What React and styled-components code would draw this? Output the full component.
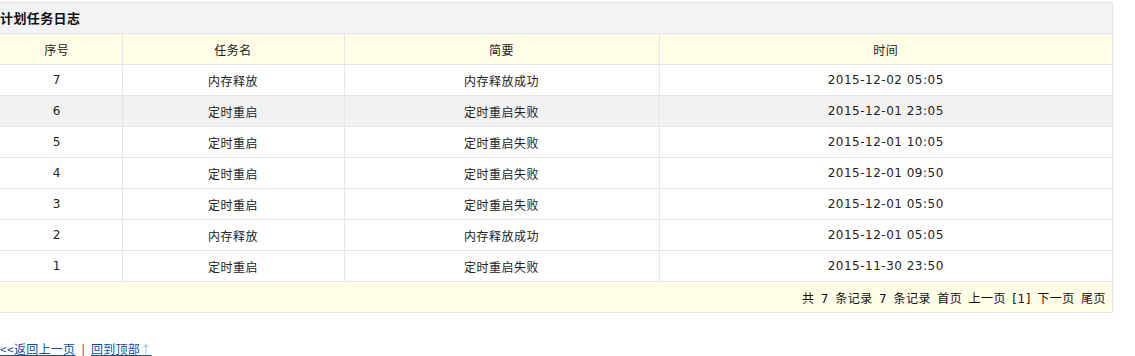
import React from 'react';
import styled, { createGlobalStyle } from 'styled-components';

const GlobalStyle = createGlobalStyle`
  body {
    margin: 0;
    background: #fff;
    font-family: "DejaVu Sans", "Noto Sans CJK SC", sans-serif;
    font-size: 12px;
    color: #222;
  }
`;

const Page = styled.div`
  width: 1122px;
  margin-left: -9px;
  padding-top: 2px;
`;

const Panel = styled.div`
  border: 1px solid #e3e6eb;
`;

const PanelTitle = styled.div`
  height: 30px;
  line-height: 30px;
  padding-left: 8px;
  background: #f2f3f5;
  border-bottom: 1px solid #e3e6eb;
  font-family: "Noto Sans CJK SC", sans-serif;
  font-size: 13px;
  font-weight: bold;
  letter-spacing: 0.4px;
  color: #111;
`;

const Table = styled.table`
  width: 100%;
  border-collapse: collapse;
  table-layout: fixed;
  letter-spacing: 0.5px;
`;

const HeadCell = styled.th`
  height: 30px;
  padding: 0;
  background: #fffde6;
  font-weight: normal;
  text-align: center;
  border-right: 1px solid #e3e6eb;
  border-bottom: 1px solid #e3e6eb;
  &:last-child { border-right: none; }
`;

const Row = styled.tr`
  background: ${(p) => (p.$alt ? '#f2f2f2' : '#fff')};
`;

const Cell = styled.td`
  height: 30px;
  padding: 0;
  text-align: center;
  border-right: 1px solid #e3e6eb;
  border-bottom: 1px solid #e3e6eb;
  &:last-child { border-right: none; }
`;

const FootCell = styled.td`
  height: 30px;
  padding: 0 6px 0 0;
  text-align: right;
  background: #fffde6;
  color: #111;
  word-spacing: 2px;
`;

const Nav = styled.div`
  margin-top: 28px;
  padding-left: 9px;
  font-family: "Noto Sans CJK SC", sans-serif;
  font-size: 12px;
  line-height: 16px;
  letter-spacing: 0.3px;
`;

const NavLink = styled.a`
  color: #0b4ea2;
  text-decoration: underline;
`;

const Sep = styled.span`
  color: #800080;
  margin: 0 6px;
`;

const Arrow = styled.span`
  color: #7fc3f0;
  font-size: 11px;
`;

const logs = [
  { id: 7, name: '内存释放', brief: '内存释放成功', time: '2015-12-02 05:05' },
  { id: 6, name: '定时重启', brief: '定时重启失败', time: '2015-12-01 23:05' },
  { id: 5, name: '定时重启', brief: '定时重启失败', time: '2015-12-01 10:05' },
  { id: 4, name: '定时重启', brief: '定时重启失败', time: '2015-12-01 09:50' },
  { id: 3, name: '定时重启', brief: '定时重启失败', time: '2015-12-01 05:50' },
  { id: 2, name: '内存释放', brief: '内存释放成功', time: '2015-12-01 05:05' },
  { id: 1, name: '定时重启', brief: '定时重启失败', time: '2015-11-30 23:50' },
];

export default function App() {
  return (
    <Page>
      <GlobalStyle />
      <Panel>
        <PanelTitle>计划任务日志</PanelTitle>
        <Table>
          <colgroup>
            <col style={{ width: 130 }} />
            <col style={{ width: 222 }} />
            <col style={{ width: 315 }} />
            <col />
          </colgroup>
          <thead>
            <tr>
              <HeadCell>序号</HeadCell>
              <HeadCell>任务名</HeadCell>
              <HeadCell>简要</HeadCell>
              <HeadCell>时间</HeadCell>
            </tr>
          </thead>
          <tbody>
            {logs.map((log, i) => (
              <Row key={log.id} $alt={i === 1}>
                <Cell>{log.id}</Cell>
                <Cell>{log.name}</Cell>
                <Cell>{log.brief}</Cell>
                <Cell>{log.time}</Cell>
              </Row>
            ))}
          </tbody>
          <tfoot>
            <tr>
              <FootCell colSpan={4}>
                共 7 条记录 7 条记录 首页 上一页 [1] 下一页 尾页
              </FootCell>
            </tr>
          </tfoot>
        </Table>
      </Panel>
      <Nav>
        <NavLink href="#">&lt;&lt;返回上一页</NavLink>
        <Sep>|</Sep>
        <NavLink href="#">回到顶部<Arrow>↑</Arrow></NavLink>
      </Nav>
    </Page>
  );
}
